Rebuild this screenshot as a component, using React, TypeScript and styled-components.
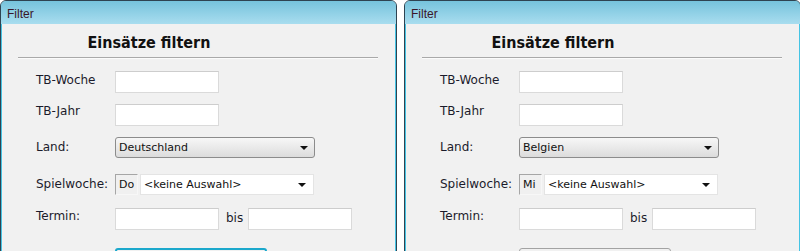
import React from 'react';
import styled, { createGlobalStyle } from 'styled-components';

const GlobalStyle = createGlobalStyle`
  html, body {
    margin: 0;
    padding: 0;
    background: #ffffff;
    overflow: hidden;
  }
  body {
    font-family: 'DejaVu Sans', Verdana, sans-serif;
  }
`;

const Desktop = styled.div`
  display: flex;
  gap: 7px;
  width: 800px;
  height: 251px;
  overflow: hidden;
`;

const Window = styled.section`
  box-sizing: border-box;
  flex: none;
  width: 397px;
  height: 300px;
  border: 1px solid #2e4351;
  border-radius: 6px 6px 0 0;
  background: #f1f1f1;
  box-shadow: inset 1px 0 0 #45c4e4, inset -1px 0 0 #45c4e4;
  display: flex;
  flex-direction: column;
  overflow: hidden;
`;

const TitleBar = styled.div`
  box-sizing: border-box;
  height: 23px;
  display: flex;
  align-items: center;
  padding: 3px 0 0 6px;
  background: linear-gradient(#76c3dc, #a9ddef);
  font-family: 'Liberation Sans', Arial, sans-serif;
  font-size: 12px;
  color: #3a1628;
`;

const Body = styled.div`
  display: flex;
  flex-direction: column;
`;

const Heading = styled.h1`
  width: 296px;
  margin: 9px 0 0;
  text-align: center;
  font-family: 'DejaVu Sans Condensed', 'DejaVu Sans', sans-serif;
  font-size: 16px;
  line-height: 20px;
  font-weight: bold;
  color: #111;
`;

const Rule = styled.div`
  width: 360px;
  height: 0;
  margin: 4px 0 0 17px;
  border-top: 1px solid #a9a9a9;
  border-bottom: 1px solid #fbfbfb;
`;

const Form = styled.div`
  display: flex;
  flex-direction: column;
  margin: 12px 0 0 35px;
`;

const Row = styled.div<{ $height: number; $labelTop?: number }>`
  display: grid;
  grid-template-columns: 79px auto;
  height: ${({ $height }) => $height}px;
  align-items: start;

  & > label {
    padding-top: ${({ $labelTop = 2 }) => $labelTop}px;
  }
`;

const Label = styled.label`
  font-size: 12px;
  line-height: 14px;
  color: #1b1b2b;
`;

const Controls = styled.div`
  display: flex;
  align-items: center;
  gap: 2px;
`;

const TextInput = styled.div`
  box-sizing: border-box;
  width: 104px;
  height: 22px;
  background: #fff;
  border: 1px solid #dadada;
  border-top-color: #cdcdcd;
`;

const Between = styled.span`
  font-size: 12px;
  color: #1b1b2b;
  margin: 0 3px 0 5px;
  padding-bottom: 3px;
`;

const Arrow = styled.span`
  width: 0;
  height: 0;
  border-left: 4px solid transparent;
  border-right: 4px solid transparent;
  border-top: 4px solid #111;
`;

const Dropdown = styled.div`
  box-sizing: border-box;
  width: 200px;
  height: 21px;
  display: flex;
  align-items: center;
  justify-content: space-between;
  padding: 0 6px 0 3px;
  border: 1px solid #8c8c8c;
  border-radius: 3px;
  background: linear-gradient(#f7f7f7, #dcdcdc);
  font-size: 11px;
  color: #111;
`;

const DayBox = styled.div`
  box-sizing: border-box;
  width: 23px;
  height: 21px;
  display: flex;
  align-items: center;
  padding-left: 3px;
  border: 1px solid #f7f7f7;
  border-top-color: #a6a6a6;
  border-left-color: #a6a6a6;
  background: #f0f0f0;
  font-size: 11px;
  color: #111;
`;

const ListBox = styled.div`
  box-sizing: border-box;
  width: 174px;
  height: 21px;
  display: flex;
  align-items: center;
  justify-content: space-between;
  padding: 0 7px 0 3px;
  background: #fff;
  border: 1px solid #e4e4e4;
  font-size: 11px;
  color: #111;
`;

const Button = styled.div<{ $focused?: boolean }>`
  box-sizing: border-box;
  width: 152px;
  height: 26px;
  border-radius: 3px;
  border: ${({ $focused }) => ($focused ? '2px solid #1ba8cc' : '1px solid #a3a3a3')};
  background: #f1f1f1;
`;

type FilterProps = {
  land: string;
  day: string;
  focused?: boolean;
};

const FilterWindow = ({ land, day, focused }: FilterProps) => (
  <Window>
    <TitleBar>Filter</TitleBar>
    <Body>
      <Heading>Einsätze filtern</Heading>
      <Rule />
      <Form>
        <Row $height={33}>
          <Label>TB-Woche</Label>
          <TextInput />
        </Row>
        <Row $height={33} $labelTop={0}>
          <Label>TB-Jahr</Label>
          <TextInput />
        </Row>
        <Row $height={37} $labelTop={3}>
          <Label>Land:</Label>
          <Dropdown>
            {land}
            <Arrow />
          </Dropdown>
        </Row>
        <Row $height={34} $labelTop={3}>
          <Label>Spielwoche:</Label>
          <Controls>
            <DayBox>{day}</DayBox>
            <ListBox>
              &lt;keine Auswahl&gt;
              <Arrow />
            </ListBox>
          </Controls>
        </Row>
        <Row $height={40} $labelTop={1}>
          <Label>Termin:</Label>
          <Controls>
            <TextInput />
            <Between>bis</Between>
            <TextInput />
          </Controls>
        </Row>
        <Row $height={30}>
          <span />
          <Button $focused={focused} />
        </Row>
      </Form>
    </Body>
  </Window>
);

export default function App() {
  return (
    <>
      <GlobalStyle />
      <Desktop>
        <FilterWindow land="Deutschland" day="Do" focused />
        <FilterWindow land="Belgien" day="Mi" />
      </Desktop>
    </>
  );
}
